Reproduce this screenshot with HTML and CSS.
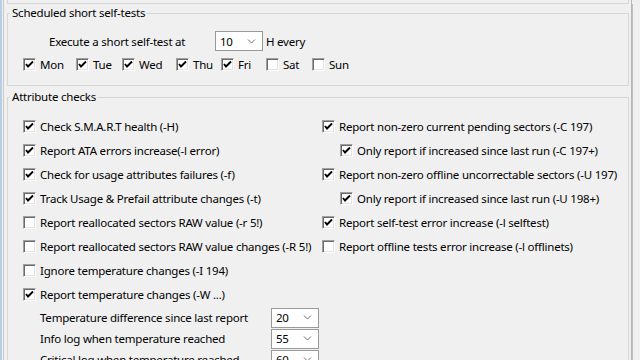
FILE: index.html
```html
<!DOCTYPE html>
<html>
<head>
<meta charset="utf-8">
<link rel="stylesheet" href="styles.css">
</head>
<body>
<div class="window">
  <div class="panel">
    <div class="prev"></div>
    <fieldset class="group g1">
      <legend>Scheduled short self-tests</legend>
      <div class="exec-row">
        <span class="exec-label">Execute a short self-test at</span>
        <span class="combo"><span>10</span><svg class="chev" width="9" height="5" viewBox="0 0 9 5"><polyline points="1,0.5 4.5,4 8,0.5" fill="none" stroke="#707070" stroke-width="1"/></svg></span>
        <span class="after">H every</span>
      </div>
      <div class="days">
        <label class="cbl"><span class="cb on"><svg width="11" height="11" viewBox="0 0 11 11"><polyline points="2,5 4,7.5 9,2.5" fill="none" stroke="#000" stroke-width="1.9"/></svg></span>Mon</label>
        <label class="cbl"><span class="cb on"><svg width="11" height="11" viewBox="0 0 11 11"><polyline points="2,5 4,7.5 9,2.5" fill="none" stroke="#000" stroke-width="1.9"/></svg></span>Tue</label>
        <label class="cbl"><span class="cb on"><svg width="11" height="11" viewBox="0 0 11 11"><polyline points="2,5 4,7.5 9,2.5" fill="none" stroke="#000" stroke-width="1.9"/></svg></span>Wed</label>
        <label class="cbl"><span class="cb on"><svg width="11" height="11" viewBox="0 0 11 11"><polyline points="2,5 4,7.5 9,2.5" fill="none" stroke="#000" stroke-width="1.9"/></svg></span>Thu</label>
        <label class="cbl"><span class="cb on"><svg width="11" height="11" viewBox="0 0 11 11"><polyline points="2,5 4,7.5 9,2.5" fill="none" stroke="#000" stroke-width="1.9"/></svg></span>Fri</label>
        <label class="cbl"><span class="cb"></span>Sat</label>
        <label class="cbl"><span class="cb"></span>Sun</label>
      </div>
    </fieldset>
    <fieldset class="group g2">
      <legend>Attribute checks</legend>
      <div class="cols">
        <div class="col left">
          <label class="row"><span class="cb on"><svg width="11" height="11" viewBox="0 0 11 11"><polyline points="2,5 4,7.5 9,2.5" fill="none" stroke="#000" stroke-width="1.9"/></svg></span>Check S.M.A.R.T health (-H)</label>
          <label class="row"><span class="cb on"><svg width="11" height="11" viewBox="0 0 11 11"><polyline points="2,5 4,7.5 9,2.5" fill="none" stroke="#000" stroke-width="1.9"/></svg></span>Report ATA errors increase(-l error)</label>
          <label class="row"><span class="cb on"><svg width="11" height="11" viewBox="0 0 11 11"><polyline points="2,5 4,7.5 9,2.5" fill="none" stroke="#000" stroke-width="1.9"/></svg></span>Check for usage attributes failures (-f)</label>
          <label class="row"><span class="cb on"><svg width="11" height="11" viewBox="0 0 11 11"><polyline points="2,5 4,7.5 9,2.5" fill="none" stroke="#000" stroke-width="1.9"/></svg></span>Track Usage &amp; Prefail attribute changes (-t)</label>
          <label class="row"><span class="cb"></span>Report reallocated sectors RAW value (-r 5!)</label>
          <label class="row"><span class="cb"></span>Report reallocated sectors RAW value changes (-R 5!)</label>
          <label class="row"><span class="cb"></span>Ignore temperature changes (-I 194)</label>
          <label class="row"><span class="cb on"><svg width="11" height="11" viewBox="0 0 11 11"><polyline points="2,5 4,7.5 9,2.5" fill="none" stroke="#000" stroke-width="1.9"/></svg></span>Report temperature changes (-W ...)</label>
          <div class="trow first"><span class="tlabel">Temperature difference since last report</span><span class="combo"><span>20</span><svg class="chev" width="9" height="5" viewBox="0 0 9 5"><polyline points="1,0.5 4.5,4 8,0.5" fill="none" stroke="#707070" stroke-width="1"/></svg></span></div>
          <div class="trow"><span class="tlabel">Info log when temperature reached</span><span class="combo"><span>55</span><svg class="chev" width="9" height="5" viewBox="0 0 9 5"><polyline points="1,0.5 4.5,4 8,0.5" fill="none" stroke="#707070" stroke-width="1"/></svg></span></div>
          <div class="trow"><span class="tlabel">Critical log when temperature reached</span><span class="combo"><span>60</span><svg class="chev" width="9" height="5" viewBox="0 0 9 5"><polyline points="1,0.5 4.5,4 8,0.5" fill="none" stroke="#707070" stroke-width="1"/></svg></span></div>
        </div>
        <div class="col right">
          <label class="row"><span class="cb on"><svg width="11" height="11" viewBox="0 0 11 11"><polyline points="2,5 4,7.5 9,2.5" fill="none" stroke="#000" stroke-width="1.9"/></svg></span>Report non-zero current pending sectors (-C 197)</label>
          <label class="row sub"><span class="cb on"><svg width="11" height="11" viewBox="0 0 11 11"><polyline points="2,5 4,7.5 9,2.5" fill="none" stroke="#000" stroke-width="1.9"/></svg></span>Only report if increased since last run (-C 197+)</label>
          <label class="row"><span class="cb on"><svg width="11" height="11" viewBox="0 0 11 11"><polyline points="2,5 4,7.5 9,2.5" fill="none" stroke="#000" stroke-width="1.9"/></svg></span>Report non-zero offline uncorrectable sectors (-U 197)</label>
          <label class="row sub"><span class="cb on"><svg width="11" height="11" viewBox="0 0 11 11"><polyline points="2,5 4,7.5 9,2.5" fill="none" stroke="#000" stroke-width="1.9"/></svg></span>Only report if increased since last run (-U 198+)</label>
          <label class="row"><span class="cb on"><svg width="11" height="11" viewBox="0 0 11 11"><polyline points="2,5 4,7.5 9,2.5" fill="none" stroke="#000" stroke-width="1.9"/></svg></span>Report self-test error increase (-l selftest)</label>
          <label class="row"><span class="cb"></span>Report offline tests error increase (-l offlinets)</label>
        </div>
      </div>
    </fieldset>
  </div>
</div>
</body>
</html>
```
FILE: styles.css
```css
html, body {
  margin: 0;
  padding: 0;
  background: #f0f0f0;
}
body {
  font-family: "Noto Sans", "Open Sans", sans-serif;
  font-size: 11.5px;
  letter-spacing: -0.22px;
  color: #000;
  white-space: nowrap;
}
.window {
  width: 640px;
  height: 360px;
  overflow: hidden;
  box-sizing: border-box;
  border-left: 2px solid #b7cde6;
  padding-left: 1px;
}
.panel {
  width: 629px;
  height: 400px;
  box-sizing: border-box;
  border-left: 1px solid #c9c9c9;
  border-right: 1px solid #b5b5b5;
  padding: 0 2px 0 3px;
  box-shadow: 5px 0 0 -4px #c0c0c0;
}
.prev {
  height: 4px;
  box-sizing: border-box;
  border: 1px solid #d7d7d7;
  border-top: none;
}
.group {
  margin: 0;
  border: 1px solid #d7d7d7;
  padding: 0;
  min-width: 0;
}
.group legend {
  margin-left: -13px;
  padding: 0 2px;
  line-height: 16px;
  font-size: 11.5px;
}
.g1 {
  margin-top: 1px;
  padding: 9px 0 10px 15px;
}
.g2 {
  margin-top: 3px;
  padding: 9px 0 0 15px;
  height: 300px;
}
.exec-row {
  height: 22px;
  display: flex;
  align-items: center;
}
.exec-label {
  margin-left: 26px;
  width: 166px;
}
.after {
  margin-left: 3px;
}
.combo {
  width: 48px;
  height: 20px;
  box-sizing: border-box;
  background: #fff;
  border: 1px solid #9a9a9a;
  display: flex;
  align-items: center;
  justify-content: space-between;
  padding: 0 6px 0 4px;
  flex: none;
}
.chev {
  display: block;
}
.days {
  height: 22px;
  margin-top: 1px;
  display: grid;
  grid-template-columns: 53px 46px 54px 45px 45px 46px auto;
  align-items: center;
}
.cbl, .row {
  display: flex;
  align-items: center;
  gap: 4px;
}
.cb {
  width: 13px;
  height: 13px;
  box-sizing: border-box;
  background: #fff;
  border: 1px solid;
  border-color: #a0a0a0 #ffffff #ffffff #a0a0a0;
  box-shadow: inset 1px 1px 0 #6a6a6a, inset -1px -1px 0 #e3e3e3;
  display: flex;
  align-items: center;
  justify-content: center;
  flex: none;
}
.cb svg {
  display: block;
}
.cols {
  display: flex;
}
.col.left {
  width: 299px;
  flex: none;
}
.row {
  height: 24px;
}
.row.sub {
  margin-left: 18px;
}
.trow {
  height: 21px;
  display: flex;
  align-items: center;
  padding-left: 17px;
}
.trow.first {
  margin-top: 1px;
}
.tlabel {
  width: 231px;
}
```
